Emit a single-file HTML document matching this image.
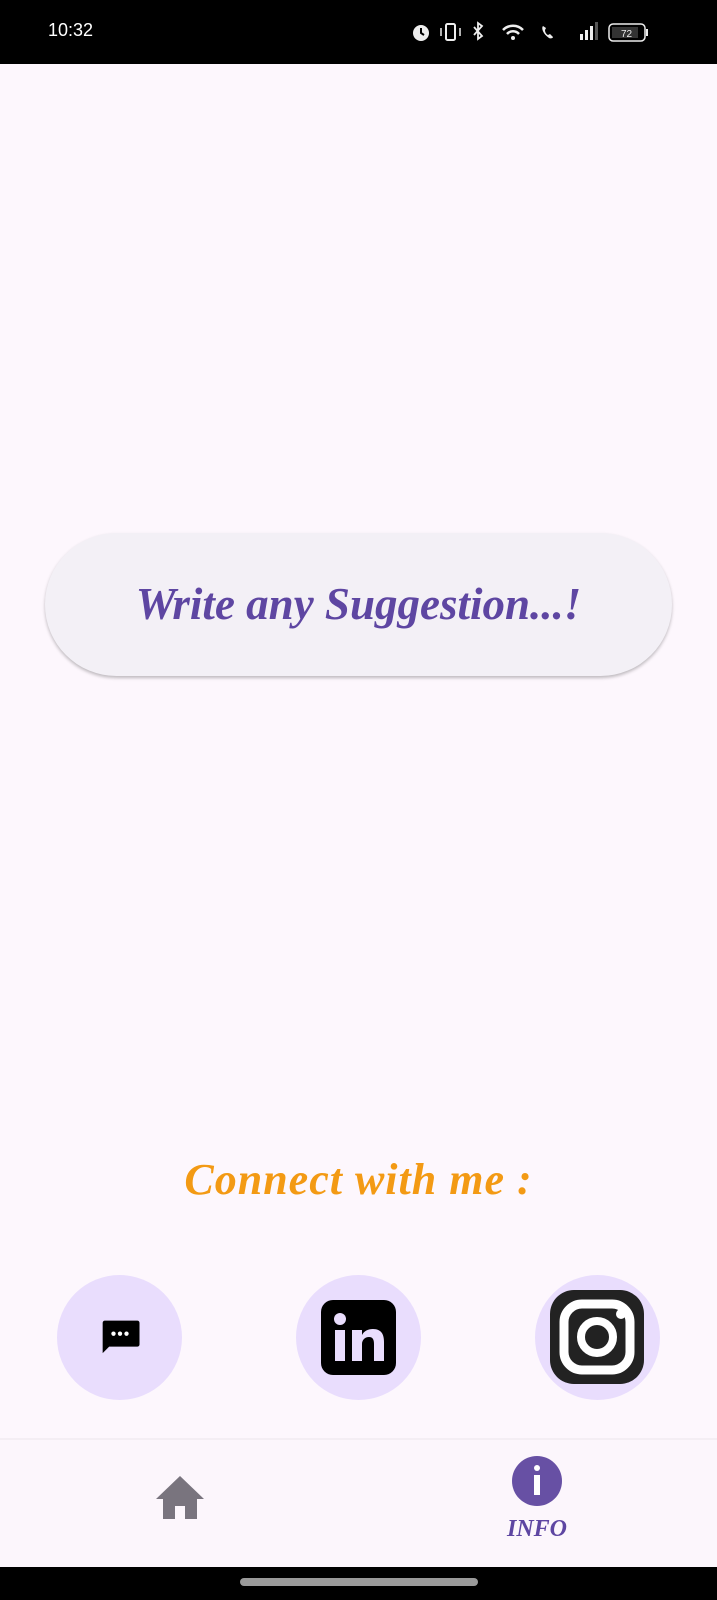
<!DOCTYPE html>
<html><head><meta charset="utf-8"><style>
body{margin:0;width:717px;height:1600px;background:#fdf7fd;position:relative;overflow:hidden;font-family:"Liberation Sans",sans-serif}
.abs{position:absolute}
.circ{position:absolute;width:125px;height:125px;border-radius:50%;background:#e9ddfd;top:1275px}
.script{font-family:"Liberation Serif",serif;font-style:italic;font-weight:bold}
</style></head><body>
<div class="abs" style="left:0;top:0;width:717px;height:64px;background:#000"></div>
<div class="abs" style="left:48px;top:20px;color:#fff;font-size:18px">10:32</div>
<svg class="abs" style="left:408px;top:18px" width="260" height="28" viewBox="0 0 260 28">
<circle cx="13" cy="15" r="8" fill="#eee"/><path d="M13 10v5l3 2" stroke="#000" stroke-width="2" fill="none"/>
<rect x="38" y="6" width="9" height="16" rx="1.5" fill="none" stroke="#eee" stroke-width="2"/>
<path d="M33 10v8M52 10v8" stroke="#eee" stroke-width="1.5"/>
<path d="M66 9l8 9-4 3V5l4 3-8 9" stroke="#eee" stroke-width="1.8" fill="none"/>
<path d="M95 12a14 14 0 0 1 20 0M99 16a8 8 0 0 1 12 0" stroke="#eee" stroke-width="2.5" fill="none"/><circle cx="105" cy="20" r="2" fill="#eee"/>
<path d="M135 8c-2 2 0 8 6 12 2 1 4 0 4-1l-3-3-2 1c-2-1-3-3-3-5l1-2-3-2z" fill="#eee"/>
<rect x="172" y="16" width="3" height="6" fill="#eee"/><rect x="177" y="12" width="3" height="10" fill="#eee"/><rect x="182" y="8" width="3" height="14" fill="#eee"/><rect x="187" y="4" width="3" height="18" fill="#555"/>
<rect x="201" y="6" width="36" height="17" rx="4" fill="none" stroke="#eee" stroke-width="1.5"/><rect x="204" y="9" width="26" height="11" fill="#333"/><rect x="238" y="11" width="2" height="7" fill="#eee"/>
<text x="213" y="19" fill="#eee" font-size="10" font-family="Liberation Sans">72</text></svg>

<div class="abs" style="left:45px;top:533px;width:627px;height:143px;border-radius:72px;background:#f3f0f6;box-shadow:0 2px 3px rgba(0,0,0,.25)"></div>
<div class="abs script" style="left:45px;top:578px;width:627px;text-align:center;color:#5e46a2;font-size:45px">Write any Suggestion...!</div>

<div class="abs script" style="left:0;top:1154px;width:717px;text-align:center;color:#f39a14;font-size:44px;letter-spacing:1px">Connect with me :</div>

<div class="circ" style="left:57px"></div>
<svg class="abs" style="left:94px;top:1312px" width="52" height="52" viewBox="0 0 24 24"><path d="M4 4h16a1 1 0 0 1 1 1v10a1 1 0 0 1-1 1H7l-3 3V5a1 1 0 0 1 1-1z" fill="#000"/><circle cx="9" cy="10" r="1" fill="#fff"/><circle cx="12" cy="10" r="1" fill="#fff"/><circle cx="15" cy="10" r="1" fill="#fff"/></svg>
<div class="circ" style="left:296px"></div>
<svg class="abs" style="left:321px;top:1300px" width="75" height="75" viewBox="0 0 75 75"><rect x="0" y="0" width="75" height="75" rx="12" fill="#000"/><rect x="14" y="30" width="10" height="31" fill="#e9ddfd"/><circle cx="19" cy="19" r="6" fill="#e9ddfd"/><path d="M31 30h10v5c2-4 6-6 11-6 8 0 11 5 11 13v19H53V44c0-4-1-7-5-7s-7 3-7 7v17H31z" fill="#e9ddfd"/></svg>
<div class="circ" style="left:535px"></div>
<svg class="abs" style="left:550px;top:1290px" width="94" height="94" viewBox="0 0 94 94"><rect x="0" y="0" width="94" height="94" rx="24" fill="#222"/><rect x="14" y="14" width="66" height="66" rx="18" fill="none" stroke="#fff" stroke-width="9"/><circle cx="47" cy="47" r="16" fill="none" stroke="#fff" stroke-width="8"/><circle cx="71" cy="24" r="5" fill="#fff"/></svg>

<div class="abs" style="left:0;top:1438px;width:717px;height:2px;background:#f4eef4"></div>
<div class="abs" style="left:0;top:1440px;width:717px;height:127px;background:#fcf6fc"></div>
<svg class="abs" style="left:155px;top:1474px" width="50" height="46" viewBox="0 0 50 46"><path d="M25 2L1 25h7v20h12V32h10v13h12V25h7z" fill="#79747e"/></svg>
<div class="abs" style="left:512px;top:1456px;width:50px;height:50px;border-radius:50%;background:#6750a4"></div>
<div class="abs" style="left:534px;top:1465px;width:6px;height:6px;border-radius:3px;background:#fff"></div>
<div class="abs" style="left:534px;top:1475px;width:6px;height:20px;background:#fff"></div>
<div class="abs script" style="left:487px;top:1516px;width:100px;text-align:center;color:#5e46a2;font-size:24px">INFO</div>
<div class="abs" style="left:0;top:1567px;width:717px;height:33px;background:#000"></div>
<div class="abs" style="left:240px;top:1578px;width:238px;height:8px;border-radius:4px;background:#9a9a9a"></div>
</body></html>
